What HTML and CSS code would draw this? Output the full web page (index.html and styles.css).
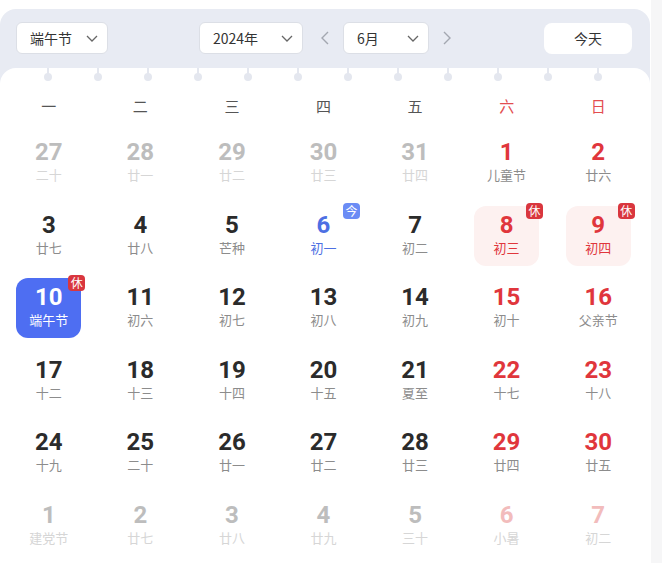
FILE: index.html
```html
<!DOCTYPE html>
<html lang="zh-CN">
<head>
<meta charset="UTF-8">
<title>万年历</title>
<meta name="viewport" content="width=device-width,initial-scale=1">
<link rel="stylesheet" href="styles.css">
</head>
<body>
<div class="page">
  <div class="calendar">
    <div class="toolbar">
      <div class="select select-holiday">
        <span>端午节</span>
        <svg class="chev" width="12" height="7" viewBox="0 0 12 7"><polyline points="1,1 6,6 11,1" fill="none" stroke="#666" stroke-width="1.3"/></svg>
      </div>
      <div class="nav">
        <div class="select select-year">
          <span>2024年</span>
          <svg class="chev" width="12" height="7" viewBox="0 0 12 7"><polyline points="1,1 6,6 11,1" fill="none" stroke="#666" stroke-width="1.3"/></svg>
        </div>
        <button class="arrow" type="button">
          <svg width="8" height="14" viewBox="0 0 8 14"><polyline points="7,1 1,7 7,13" fill="none" stroke="#a3a7b0" stroke-width="1.4"/></svg>
        </button>
        <div class="select select-month">
          <span>6月</span>
          <svg class="chev" width="12" height="7" viewBox="0 0 12 7"><polyline points="1,1 6,6 11,1" fill="none" stroke="#666" stroke-width="1.3"/></svg>
        </div>
        <button class="arrow" type="button">
          <svg width="8" height="14" viewBox="0 0 8 14"><polyline points="1,1 7,7 1,13" fill="none" stroke="#a3a7b0" stroke-width="1.4"/></svg>
        </button>
      </div>
      <button class="today-btn" type="button">今天</button>
    </div>

    <div class="panel">
      <div class="rings" id="rings"></div>
      <div class="weekdays">
        <span>一</span><span>二</span><span>三</span><span>四</span><span>五</span>
        <span class="weekend">六</span><span class="weekend">日</span>
      </div>
      <div class="days" id="days"></div>
    </div>
  </div>
</div>

<script>
// 上下月的日期 o=other，休=rest，今=today
const cells = [
  { d: 27, l: '二十', o: 1 }, { d: 28, l: '廿一', o: 1 }, { d: 29, l: '廿二', o: 1 },
  { d: 30, l: '廿三', o: 1 }, { d: 31, l: '廿四', o: 1 }, { d: 1, l: '儿童节' }, { d: 2, l: '廿六' },
  { d: 3, l: '廿七' }, { d: 4, l: '廿八' }, { d: 5, l: '芒种' }, { d: 6, l: '初一', today: 1 },
  { d: 7, l: '初二' }, { d: 8, l: '初三', rest: 1 }, { d: 9, l: '初四', rest: 1 },
  { d: 10, l: '端午节', rest: 1, sel: 1 }, { d: 11, l: '初六' }, { d: 12, l: '初七' }, { d: 13, l: '初八' },
  { d: 14, l: '初九' }, { d: 15, l: '初十' }, { d: 16, l: '父亲节' },
  { d: 17, l: '十二' }, { d: 18, l: '十三' }, { d: 19, l: '十四' }, { d: 20, l: '十五' },
  { d: 21, l: '夏至' }, { d: 22, l: '十七' }, { d: 23, l: '十八' },
  { d: 24, l: '十九' }, { d: 25, l: '二十' }, { d: 26, l: '廿一' }, { d: 27, l: '廿二' },
  { d: 28, l: '廿三' }, { d: 29, l: '廿四' }, { d: 30, l: '廿五' },
  { d: 1, l: '建党节', o: 1 }, { d: 2, l: '廿七', o: 1 }, { d: 3, l: '廿八', o: 1 },
  { d: 4, l: '廿九', o: 1 }, { d: 5, l: '三十', o: 1 }, { d: 6, l: '小暑', o: 1 }, { d: 7, l: '初二', o: 1 }
];

document.getElementById('rings').innerHTML = '<i></i>'.repeat(12);

document.getElementById('days').innerHTML = cells.map((c, i) => {
  const cls = ['day'];
  if (i % 7 >= 5) cls.push('weekend');
  if (c.o) cls.push('other');
  if (c.today) cls.push('today');
  if (c.rest && !c.sel) cls.push('rest');
  if (c.sel) cls.push('selected');
  let badge = '';
  if (c.rest) badge = '<em class="badge">休</em>';
  if (c.today) badge = '<em class="badge badge-today">今</em>';
  return `<div class="cell"><div class="${cls.join(' ')}">${badge}<b>${c.d}</b><small>${c.l}</small></div></div>`;
}).join('');
</script>
</body>
</html>
```

FILE: styles.css
```css
body {
  margin: 0;
  background: #f6f6f7;
  font-family: "Noto Sans CJK SC", "Noto Sans", sans-serif;
  color: #333;
}
.page {
  width: 651px;
  min-height: 563px;
  padding-top: 9px;
  background: #fff;
}
.calendar {
  width: 650px;
  background: #e8ebf3;
  border-radius: 16px 16px 0 0;
}

/* toolbar */
.toolbar {
  display: grid;
  grid-template-columns: 1fr auto 1fr;
  align-items: center;
  padding: 13px 18px 14px 16px;
}
.select {
  box-sizing: border-box;
  height: 32px;
  display: flex;
  align-items: center;
  justify-content: space-between;
  padding: 0 9px 0 13px;
  background: #fff;
  border: 1px solid #dcdfe6;
  border-radius: 6px;
  font-size: 14px;
  color: #333;
}
.select-holiday { width: 92px; }
.select-year { width: 104px; margin-right: 4px; }
.select-month { width: 86px; }
.chev { display: block; }
.nav {
  display: flex;
  align-items: center;
  gap: 8px;
  margin-left: 8px;
}
.arrow {
  width: 20px;
  height: 32px;
  padding: 0;
  border: none;
  background: none;
  display: flex;
  align-items: center;
  justify-content: center;
}
.today-btn {
  justify-self: end;
  width: 88px;
  height: 31px;
  border: none;
  border-radius: 8px;
  background: #fff;
  font: inherit;
  font-size: 14px;
  color: #333;
}

/* body */
.panel {
  background: #fff;
  border-radius: 16px 16px 0 0;
  padding: 0 6px 20px 3px;
}
.rings {
  display: flex;
  gap: 42px;
  padding-left: 41px;
}
.rings i {
  position: relative;
  display: block;
  width: 8px;
  height: 13px;
}
.rings i::before {
  content: "";
  position: absolute;
  left: 3px;
  top: 0;
  width: 2px;
  height: 6px;
  background: #e4e7ef;
}
.rings i::after {
  content: "";
  position: absolute;
  left: 0;
  top: 5px;
  width: 8px;
  height: 8px;
  border-radius: 50%;
  background: #e4e7ef;
}
.weekdays {
  display: grid;
  grid-template-columns: repeat(7, 1fr);
  margin-top: 6px;
  height: 36px;
  align-items: center;
  text-align: center;
  font-size: 15px;
  color: #555;
}
.weekdays .weekend { color: #e34d50; }

.days {
  display: grid;
  grid-template-columns: repeat(7, 1fr);
  row-gap: 12.5px;
  margin-top: 10px;
}
.cell {
  display: flex;
  justify-content: center;
}
.day {
  position: relative;
  box-sizing: border-box;
  width: 65px;
  height: 60px;
  padding-top: 8px;
  border-radius: 12px;
  text-align: center;
}
.day b {
  display: block;
  height: 24px;
  line-height: 22px;
  font-family: Roboto, "Liberation Sans", sans-serif;
  font-weight: 700;
  font-size: 24px;
  color: #2b2b2b;
}
.day small {
  display: block;
  margin-top: 2px;
  line-height: 15px;
  font-size: 13px;
  color: #8c8c8c;
}
.day.weekend b { color: #e0363c; }
.day.other b { color: #bdbdbd; }
.day.other small { color: #d6d6d6; }
.day.other.weekend b { color: #f2bcbc; }

.day.today b,
.day.today small { color: #4d6fe3; }

.day.rest { background: #fdf1f0; }
.day.rest small { color: #e0363c; }

.day.selected { background: #4e6ef2; }
.day.selected b,
.day.selected small { color: #fff; }

.badge {
  position: absolute;
  top: -3px;
  right: -4px;
  width: 17px;
  height: 16px;
  border-radius: 4px;
  background: #d9363e;
  color: #fff;
  font-style: normal;
  font-size: 12px;
  line-height: 16px;
  text-align: center;
}
.badge-today { background: #6b8cf5; }
```
